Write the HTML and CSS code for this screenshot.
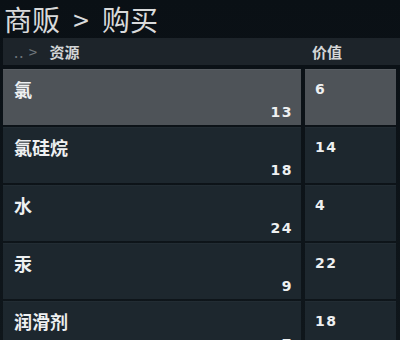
FILE: index.html
```html
<!DOCTYPE html>
<html lang="zh">
<head>
    <meta charset="UTF-8">
    <title>商贩 > 购买</title>
    <link rel="stylesheet" href="styles.css">
</head>
<body>
    <div class="screen">
        <h1 class="crumb">商贩 &gt; 购买</h1>

        <div class="table-head">
            <div class="head-name">
                <span class="path">.. &gt;</span>
                <span class="head-title">资源</span>
            </div>
            <div class="head-value">价值</div>
        </div>

        <div class="list">
            <div class="row selected">
                <div class="cell name-cell">
                    <span class="name">氯</span>
                    <span class="count">13</span>
                </div>
                <div class="cell value-cell">6</div>
            </div>
            <div class="row">
                <div class="cell name-cell">
                    <span class="name">氯硅烷</span>
                    <span class="count">18</span>
                </div>
                <div class="cell value-cell">14</div>
            </div>
            <div class="row">
                <div class="cell name-cell">
                    <span class="name">水</span>
                    <span class="count">24</span>
                </div>
                <div class="cell value-cell">4</div>
            </div>
            <div class="row">
                <div class="cell name-cell">
                    <span class="name">汞</span>
                    <span class="count">9</span>
                </div>
                <div class="cell value-cell">22</div>
            </div>
            <div class="row">
                <div class="cell name-cell">
                    <span class="name">润滑剂</span>
                    <span class="count">7</span>
                </div>
                <div class="cell value-cell">18</div>
            </div>
        </div>
    </div>
</body>
</html>
```

FILE: styles.css
```css
body {
    margin: 0;
    background-color: #0c1217;
    font-family: "Noto Sans CJK SC", "Noto Sans", sans-serif;
    color: #eef0f1;
    overflow: hidden;
}
.screen {
    width: 400px;
    height: 340px;
    background: linear-gradient(180deg, #0a1015 0%, #0f161b 100%);
}
.crumb {
    margin: 0;
    height: 38px;
    padding-left: 4px;
    font-size: 28px;
    font-weight: 400;
    line-height: 38px;
    word-spacing: 7px;
    color: #d9dadb;
}
.table-head {
    display: flex;
    align-items: center;
    height: 27px;
    margin-left: 3px;
    background-color: #1d242a;
    font-size: 15px;
    font-weight: 700;
}
.head-name {
    width: 309px;
    padding-left: 11px;
    box-sizing: border-box;
}
.path {
    color: #6f767c;
    font-weight: 400;
    margin-right: 8px;
    letter-spacing: 1px;
}
.head-title, .head-value {
    color: #d4d6d7;
}
.list {
    margin-top: 4px;
    padding-left: 3px;
}
.row {
    display: grid;
    grid-template-columns: 298px 91px;
    gap: 4px;
    height: 56px;
    margin-bottom: 2px;
}
.cell {
    background-color: #1d272e;
    border-top: 1px solid #222c33;
    box-sizing: border-box;
}
.row.selected .cell {
    background-color: #4e5358;
    border-top-color: #575c61;
}
.name-cell {
    display: flex;
    flex-direction: column;
    justify-content: space-between;
    padding: 8px 8px 5px 11px;
}
.name {
    font-size: 18px;
    font-weight: 700;
    line-height: 22px;
}
.count, .value-cell {
    font-family: "DejaVu Sans", sans-serif;
    font-size: 14px;
    font-weight: 700;
    letter-spacing: 1.5px;
}
.count {
    align-self: flex-end;
    line-height: 16px;
}
.value-cell {
    padding: 11px 0 0 10px;
    line-height: 16px;
}
```
